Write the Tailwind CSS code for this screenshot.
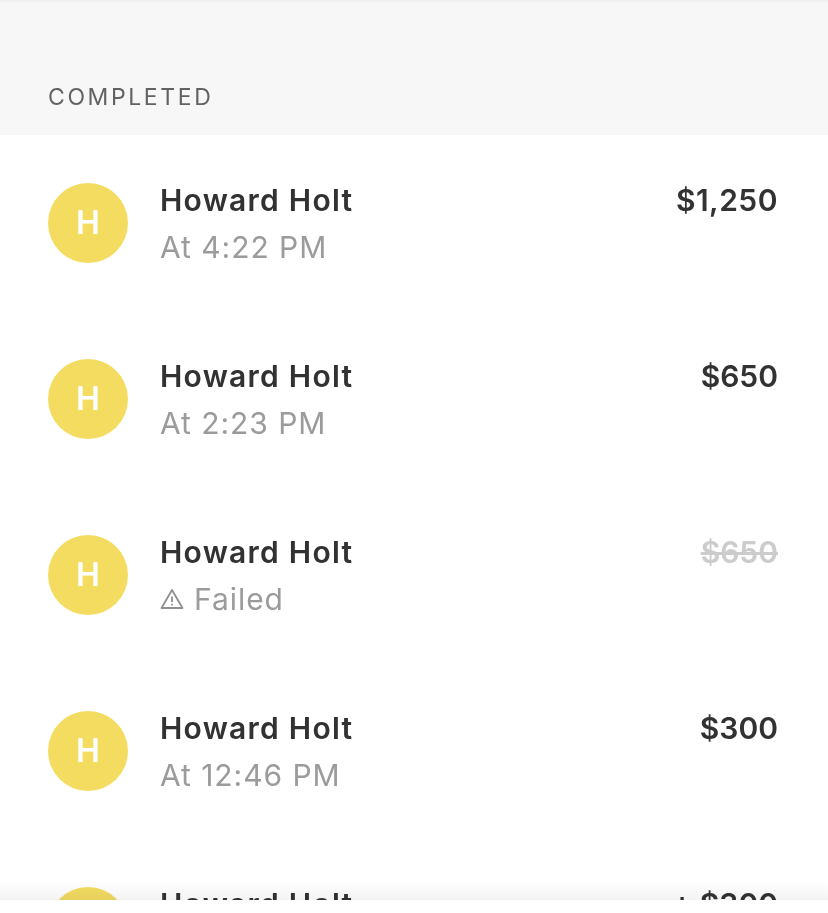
<!doctype html>
<html><head><meta charset="utf-8"><script src="https://cdn.jsdelivr.net/npm/@tailwindcss/browser@4"></script></head>
<body class="bg-white">
<div class="relative h-[900px] w-[828px] overflow-hidden bg-white font-['Inter',sans-serif]">
  <div class="h-[135px] border-t-2 border-[#efefef] bg-[#f7f7f7] pl-[48px] pt-[81px]">
    <p class="text-[23px] leading-[28px] tracking-[2.6px] text-[#626262]">COMPLETED</p>
  </div>
  <ul class="flex flex-col">
    <li class="flex h-[176px] items-start pl-[48px] pt-[48px] pr-[50px]">
      <div class="flex h-[80px] w-[80px] shrink-0 items-center justify-center rounded-full bg-[#f4dc60] text-[32px] font-semibold text-white">H</div>
      <div class="-mt-[1px] ml-[32px] flex-1">
        <p class="text-[30px] leading-[36px] font-semibold tracking-[1.25px] text-[#323232]">Howard Holt</p>
        <p class="mt-[11px] text-[30px] leading-[36px] tracking-[0.95px] text-[#9b9b9b]">At 4:22 PM</p>
      </div>
      <p class="-mt-[1px] text-[30px] leading-[36px] font-semibold tracking-[0.5px] text-[#323232]">$1,250</p>
    </li>
    <li class="flex h-[176px] items-start pl-[48px] pt-[48px] pr-[50px]">
      <div class="flex h-[80px] w-[80px] shrink-0 items-center justify-center rounded-full bg-[#f4dc60] text-[32px] font-semibold text-white">H</div>
      <div class="-mt-[1px] ml-[32px] flex-1">
        <p class="text-[30px] leading-[36px] font-semibold tracking-[1.25px] text-[#323232]">Howard Holt</p>
        <p class="mt-[11px] text-[30px] leading-[36px] tracking-[0.95px] text-[#9b9b9b]">At 2:23 PM</p>
      </div>
      <p class="-mt-[1px] text-[30px] leading-[36px] font-semibold text-[#323232]">$650</p>
    </li>
    <li class="flex h-[176px] items-start pl-[48px] pt-[48px] pr-[50px]">
      <div class="flex h-[80px] w-[80px] shrink-0 items-center justify-center rounded-full bg-[#f4dc60] text-[32px] font-semibold text-white">H</div>
      <div class="-mt-[1px] ml-[32px] flex-1">
        <p class="text-[30px] leading-[36px] font-semibold tracking-[1.25px] text-[#323232]">Howard Holt</p>
        <p class="mt-[11px] flex items-center gap-[10px] text-[30px] leading-[36px] tracking-[0.95px] text-[#9b9b9b]">
          <svg class="h-[24px] w-[24px]" viewBox="0 0 24 24" fill="none" stroke="#8f8f8f" stroke-width="1.8" stroke-linejoin="round"><path d="M12 3 L22.5 21 H1.5 Z"/><path d="M12 9.5v5.5M12 16.8v1.8"/></svg>
          Failed</p>
      </div>
      <p class="-mt-[1px] text-[30px] leading-[36px] font-semibold text-[#cccccc] line-through">$650</p>
    </li>
    <li class="flex h-[176px] items-start pl-[48px] pt-[48px] pr-[50px]">
      <div class="flex h-[80px] w-[80px] shrink-0 items-center justify-center rounded-full bg-[#f4dc60] text-[32px] font-semibold text-white">H</div>
      <div class="-mt-[1px] ml-[32px] flex-1">
        <p class="text-[30px] leading-[36px] font-semibold tracking-[1.25px] text-[#323232]">Howard Holt</p>
        <p class="mt-[11px] text-[30px] leading-[36px] tracking-[0.95px] text-[#9b9b9b]">At 12:46 PM</p>
      </div>
      <p class="-mt-[1px] text-[30px] leading-[36px] font-semibold text-[#323232]">$300</p>
    </li>
    <li class="flex h-[176px] items-start pl-[48px] pt-[48px] pr-[50px]">
      <div class="flex h-[80px] w-[80px] shrink-0 items-center justify-center rounded-full bg-[#f4dc60] text-[32px] font-semibold text-white">H</div>
      <div class="-mt-[1px] ml-[32px] flex-1">
        <p class="text-[30px] leading-[36px] font-semibold tracking-[1.25px] text-[#323232]">Howard Holt</p>
      </div>
      <p class="-mt-[1px] text-[30px] leading-[36px] font-semibold text-[#323232]">+ $300</p>
    </li>
  </ul>
  <div class="absolute inset-x-0 bottom-0 h-[18px] bg-gradient-to-b from-white to-[#f3f3f3] mix-blend-multiply"></div>
</div>
</body></html>
